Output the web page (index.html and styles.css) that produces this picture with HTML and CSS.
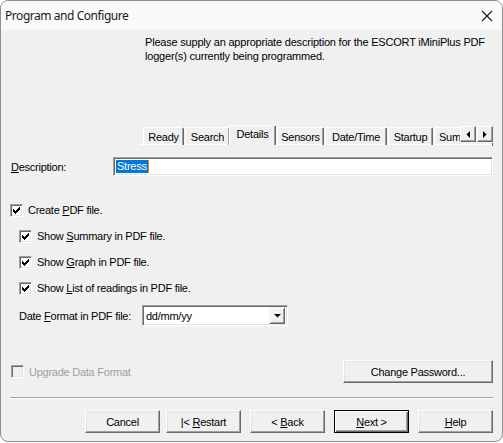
FILE: index.html
```html
<!DOCTYPE html>
<html>
<head>
<meta charset="utf-8">
<link rel="stylesheet" href="styles.css">
</head>
<body>
<div class="window">
  <div class="titlebar">
    <span class="title">Program and Configure</span>
    <svg class="close" width="12" height="12" viewBox="0 0 12 12"><path d="M1 1 L11 11 M11 1 L1 11" stroke="#1a1a1a" stroke-width="1.1" fill="none"/></svg>
  </div>
  <div class="content">
    <p class="intro">Please supply an appropriate description for the ESCORT iMiniPlus PDF logger(s) currently being programmed.</p>

    <div class="tabbar">
      <div class="tabs-clip">
        <div class="tab t-ready">Ready</div>
        <div class="tab t-search">Search</div>
        <div class="tab active t-details">Details</div>
        <div class="tab t-sensors">Sensors</div>
        <div class="tab t-datetime">Date/Time</div>
        <div class="tab t-startup">Startup</div>
        <div class="tab t-summary">Summary</div>
      </div>
      <div class="scroll-btns">
        <div class="sbtn"><svg width="4" height="7" viewBox="0 0 4 7"><path d="M4 0 L4 7 L0.5 3.5 Z" fill="#000"/></svg></div>
        <div class="sbtn"><svg width="4" height="7" viewBox="0 0 4 7"><path d="M0 0 L0 7 L3.5 3.5 Z" fill="#000"/></svg></div>
      </div>
    </div>

    <div class="desc-row">
      <label class="desc-label"><u>D</u>escription:</label>
      <div class="field desc-field"><span class="sel">Stress</span><span class="caret"></span></div>
    </div>

    <div class="check-row first">
      <span class="cbox"><svg class="tick" width="7" height="7" viewBox="0 0 7 7"><path d="M6 0h1v1h-1z M5 1h2v1h-2z M0 2h1v1h-1z M4 2h3v1h-3z M0 3h2v1h-2z M3 3h3v1h-3z M0 4h5v1h-5z M1 5h3v1h-3z M2 6h1v1h-1z" fill="#000"/></svg></span>
      <span>Create <u>P</u>DF file.</span>
    </div>
    <div class="check-row indent r1">
      <span class="cbox"><svg class="tick" width="7" height="7" viewBox="0 0 7 7"><path d="M6 0h1v1h-1z M5 1h2v1h-2z M0 2h1v1h-1z M4 2h3v1h-3z M0 3h2v1h-2z M3 3h3v1h-3z M0 4h5v1h-5z M1 5h3v1h-3z M2 6h1v1h-1z" fill="#000"/></svg></span>
      <span>Show <u>S</u>ummary in PDF file.</span>
    </div>
    <div class="check-row indent r2">
      <span class="cbox"><svg class="tick" width="7" height="7" viewBox="0 0 7 7"><path d="M6 0h1v1h-1z M5 1h2v1h-2z M0 2h1v1h-1z M4 2h3v1h-3z M0 3h2v1h-2z M3 3h3v1h-3z M0 4h5v1h-5z M1 5h3v1h-3z M2 6h1v1h-1z" fill="#000"/></svg></span>
      <span>Show <u>G</u>raph in PDF file.</span>
    </div>
    <div class="check-row indent r2">
      <span class="cbox"><svg class="tick" width="7" height="7" viewBox="0 0 7 7"><path d="M6 0h1v1h-1z M5 1h2v1h-2z M0 2h1v1h-1z M4 2h3v1h-3z M0 3h2v1h-2z M3 3h3v1h-3z M0 4h5v1h-5z M1 5h3v1h-3z M2 6h1v1h-1z" fill="#000"/></svg></span>
      <span>Show <u>L</u>ist of readings in PDF file.</span>
    </div>

    <div class="date-row">
      <span class="date-label">Date <u>F</u>ormat in PDF file:</span>
      <div class="field select">
        <span class="sel-text">dd/mm/yy</span>
        <span class="drop"><svg width="7" height="4" viewBox="0 0 7 4"><path d="M0 0 L7 0 L3.5 3.5 Z" fill="#000"/></svg></span>
      </div>
    </div>

    <div class="upgrade-row">
      <div class="upgrade">
        <span class="cbox disabled"></span>
        <span class="disabled-text">Upgrade Data Format</span>
      </div>
      <div class="btn wide"><span>Change Password...</span></div>
    </div>

    <div class="separator"></div>

    <div class="buttons">
      <div class="btn"><span>Cancel</span></div>
      <div class="btn restart"><span>|&lt; <u>R</u>estart</span></div>
      <div class="btn gap9"><span>&lt; <u>B</u>ack</span></div>
      <div class="btn gap9 default"><span><u>N</u>ext &gt;</span></div>
      <div class="btn gap9"><span><u>H</u>elp</span></div>
    </div>
  </div>
</div>
</body>
</html>
```

FILE: styles.css
```css
* { box-sizing: border-box; }
html, body { margin: 0; padding: 0; }
body {
  width: 503px;
  height: 443px;
  background: #ffffff;
  font-family: "Liberation Sans", Arial, sans-serif;
  font-size: 11px;
  letter-spacing: -0.25px;
  color: #000;
  overflow: hidden;
}
u { text-decoration: underline; text-underline-offset: 1px; }

.window {
  width: 503px;
  height: 442px;
  border: 1px solid #8e8e8e;
  border-radius: 8px;
  background: #f0f0f0;
  overflow: hidden;
  display: flex;
  flex-direction: column;
}

.titlebar {
  height: 29px;
  background: #f9f9f9;
  display: flex;
  align-items: center;
  justify-content: space-between;
  padding: 0 9px 1px 4px;
}
.title {
  font-family: "Noto Sans", "Segoe UI", sans-serif;
  font-size: 12px;
  color: #1a1a1a;
  letter-spacing: -0.45px;
}
.close { display: block; margin-top: 1px; }

.content {
  flex: 1;
  padding: 0 9px;
  display: flex;
  flex-direction: column;
}

.intro {
  margin: 5px 0 0 135px;
  line-height: 14px;
  width: 350px;
  letter-spacing: -0.2px;
}

/* tabs */
.tabbar {
  margin: 60px 0 0 129px;
  height: 22px;
  display: flex;
  align-items: flex-start;
  border-bottom: 1px solid #ffffff;
  position: relative;
}
.tabbar::after {
  content: "";
  position: absolute;
  right: 0;
  bottom: -2px;
  width: 1px;
  height: 3px;
  background: #696969;
}
.tabs-clip {
  flex: 1;
  display: flex;
  align-items: flex-end;
  height: 22px;
  overflow: hidden;
  padding-left: 4px;
}
.tab {
  height: 18px;
  padding: 1px 0 0 0;
  margin-right: 1px;
  line-height: 17px;
  text-align: center;
  border-top: 1px solid #fff;
  border-left: 1px solid #fff;
  border-right: 1px solid #696969;
  box-shadow: inset -1px 0 #a0a0a0;
  border-radius: 2px 2px 0 0;
  white-space: nowrap;
  flex: none;
}
.t-ready { width: 41px; }
.t-search { width: 45px; }
.t-details { width: 47px; }
.t-sensors { width: 47px; }
.t-datetime { width: 62px; }
.t-startup { width: 45px; }
.t-summary { width: 56px; text-align: left; padding-left: 4px; }
.tab.active {
  height: 21px;
  margin: 0 1px -1px -2px;
  padding: 0;
  line-height: 17px;
  background: #f0f0f0;
  position: relative;
  z-index: 1;
}
.scroll-btns {
  display: flex;
  margin-top: 3px;
  gap: 1px;
}
.sbtn {
  width: 16px;
  height: 16px;
  background: #f0f0f0;
  border: 1px solid;
  border-color: #fff #696969 #696969 #fff;
  box-shadow: inset -1px -1px #a0a0a0;
  display: flex;
  align-items: center;
  justify-content: center;
}

/* fields */
.field {
  background: #fff;
  border: 1px solid;
  border-color: #a0a0a0 #fff #fff #a0a0a0;
  box-shadow: inset 1px 1px #696969, inset -1px -1px #e3e3e3;
}

.desc-row {
  display: flex;
  align-items: center;
  margin-top: 12px;
}
.desc-label { width: 103px; padding-left: 1px; }
.desc-field {
  flex: 1;
  height: 19px;
  padding: 2px 2px;
  display: flex;
  align-items: center;
}
.sel {
  background: #0078d7;
  color: #fff;
  line-height: 13px;
  padding: 0 1px;
}
.caret {
  display: inline-block;
  width: 1px;
  height: 13px;
  background: #f07a1e;
}

/* checkboxes */
.check-row {
  display: flex;
  align-items: center;
  gap: 5px;
  height: 13px;
  line-height: 13px;
}
.check-row.first { margin-top: 28px; }
.check-row.indent { padding-left: 9px; }
.check-row.r1 { margin-top: 13px; }
.check-row.r2 { margin-top: 13px; }
.cbox {
  width: 13px;
  height: 13px;
  flex: none;
  background: #fff;
  border: 1px solid;
  border-color: #a0a0a0 #fff #fff #a0a0a0;
  box-shadow: inset 1px 1px #696969, inset -1px -1px #e3e3e3;
  padding: 2px;
}
.cbox svg { display: block; shape-rendering: crispEdges; }
.cbox.disabled { background: #f0f0f0; }

.date-row {
  display: flex;
  align-items: center;
  margin-top: 10px;
  padding-left: 9px;
}
.date-label { width: 123px; }
.select {
  width: 146px;
  height: 21px;
  display: flex;
  align-items: center;
  justify-content: space-between;
  padding: 2px 2px 2px 3px;
}
.drop {
  width: 16px;
  height: 17px;
  background: #f0f0f0;
  border: 1px solid;
  border-color: #f0f0f0 #696969 #696969 #f0f0f0;
  box-shadow: inset 1px 1px #fff, inset -1px -1px #a0a0a0;
  display: flex;
  align-items: center;
  justify-content: center;
}

.upgrade-row {
  display: flex;
  align-items: center;
  justify-content: space-between;
  margin-top: 34px;
}
.upgrade { display: flex; align-items: center; gap: 5px; padding-left: 1px; }
.disabled-text { color: #a0a0a0; }

.btn {
  width: 75px;
  height: 23px;
  background: #f0f0f0;
  border: 1px solid;
  border-color: #fff #696969 #696969 #fff;
  box-shadow: inset -1px -1px #a0a0a0, inset 1px 1px #e3e3e3;
  display: flex;
  align-items: center;
  justify-content: center;
  flex: none;
  white-space: pre;
}
.btn.wide { width: 150px; }
.btn.default {
  border: 1px solid #000;
  box-shadow: inset 1px 1px #fff, inset -1px -1px #696969, inset -2px -2px #a0a0a0;
}

.separator {
  margin-top: 14px;
  height: 2px;
  border-top: 1px solid #a0a0a0;
  border-bottom: 1px solid #fff;
}

.buttons {
  display: flex;
  justify-content: flex-end;
  margin-top: 11px;
}
.btn.restart { margin-left: 6px; }
.btn.gap9 { margin-left: 9px; }
```
